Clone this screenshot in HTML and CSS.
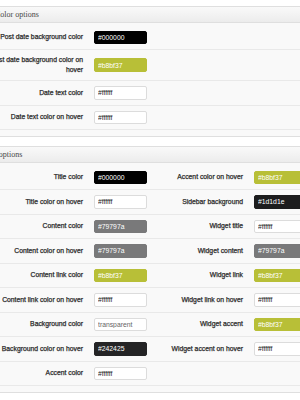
FILE: index.html
```html
<!DOCTYPE html>
<html lang="en">
<head>
    <meta charset="UTF-8">
    <meta name="viewport" content="width=device-width, initial-scale=1.0">
    <title>Theme options - Colors</title>
    <link rel="stylesheet" href="styles.css">
</head>
<body>
    <div class="wrap">
        <div class="postbox">
            <h3 class="hndle hndle-short">Color options</h3>
            <div class="inside">
                <div class="form-row">
                    <label class="field-label">Post date background color</label>
                    <div class="field"><input class="color-input c-black" type="text" value="#000000"></div>
                </div>
                <div class="form-row">
                    <label class="field-label">Post date background color on hover</label>
                    <div class="field"><input class="color-input c-green" type="text" value="#b8bf37"></div>
                </div>
                <div class="form-row">
                    <label class="field-label">Date text color</label>
                    <div class="field"><input class="color-input c-white" type="text" value="#ffffff"></div>
                </div>
                <div class="form-row">
                    <label class="field-label">Date text color on hover</label>
                    <div class="field"><input class="color-input c-white" type="text" value="#ffffff"></div>
                </div>
            </div>
        </div>

        <div class="postbox">
            <h3 class="hndle">Post options</h3>
            <div class="inside">
                <div class="form-row">
                    <label class="field-label">Title color</label>
                    <div class="field"><input class="color-input c-black" type="text" value="#000000"></div>
                    <label class="field-label side">Accent color on hover</label>
                    <div class="field"><input class="color-input c-green" type="text" value="#b8bf37"></div>
                </div>
                <div class="form-row">
                    <label class="field-label">Title color on hover</label>
                    <div class="field"><input class="color-input c-white" type="text" value="#ffffff"></div>
                    <label class="field-label side">Sidebar background</label>
                    <div class="field"><input class="color-input c-coal" type="text" value="#1d1d1e"></div>
                </div>
                <div class="form-row">
                    <label class="field-label">Content color</label>
                    <div class="field"><input class="color-input c-gray" type="text" value="#79797a"></div>
                    <label class="field-label side">Widget title</label>
                    <div class="field"><input class="color-input c-white" type="text" value="#ffffff"></div>
                </div>
                <div class="form-row">
                    <label class="field-label">Content color on hover</label>
                    <div class="field"><input class="color-input c-gray" type="text" value="#79797a"></div>
                    <label class="field-label side">Widget content</label>
                    <div class="field"><input class="color-input c-gray" type="text" value="#79797a"></div>
                </div>
                <div class="form-row">
                    <label class="field-label">Content link color</label>
                    <div class="field"><input class="color-input c-green" type="text" value="#b8bf37"></div>
                    <label class="field-label side">Widget link</label>
                    <div class="field"><input class="color-input c-green" type="text" value="#b8bf37"></div>
                </div>
                <div class="form-row">
                    <label class="field-label">Content link color on hover</label>
                    <div class="field"><input class="color-input c-white" type="text" value="#ffffff"></div>
                    <label class="field-label side">Widget link on hover</label>
                    <div class="field"><input class="color-input c-white" type="text" value="#ffffff"></div>
                </div>
                <div class="form-row">
                    <label class="field-label">Background color</label>
                    <div class="field"><input class="color-input c-clear" type="text" value="transparent"></div>
                    <label class="field-label side">Widget accent</label>
                    <div class="field"><input class="color-input c-green" type="text" value="#b8bf37"></div>
                </div>
                <div class="form-row">
                    <label class="field-label">Background color on hover</label>
                    <div class="field"><input class="color-input c-dark" type="text" value="#242425"></div>
                    <label class="field-label side">Widget accent on hover</label>
                    <div class="field"><input class="color-input c-white" type="text" value="#ffffff"></div>
                </div>
                <div class="form-row">
                    <label class="field-label">Accent color</label>
                    <div class="field"><input class="color-input c-white" type="text" value="#ffffff"></div>
                </div>
            </div>
        </div>
    </div>
</body>
</html>
```

FILE: styles.css
```css
* {
    margin: 0;
    padding: 0;
    box-sizing: border-box;
}

html,
body {
    overflow: hidden;
}

body {
    font-family: 'Liberation Sans', Arial, sans-serif;
    background: #fff;
    color: #333;
}

.wrap {
    width: 380px;
    margin-left: -24px;
    padding-top: 6px;
}

.postbox {
    border: 1px solid #dfdfdf;
    border-radius: 3px;
    background: #f9f9f9;
    margin-bottom: 9px;
}

.hndle {
    height: 16px;
    line-height: 15px;
    padding-left: 6px;
    font-family: 'Liberation Serif', 'Times New Roman', serif;
    font-size: 8px;
    font-weight: normal;
    color: #464646;
    background: linear-gradient(to bottom, #f9f9f9, #ececec);
    border-bottom: 1px solid #dfdfdf;
}

.hndle-short {
    padding-left: 18px;
}

.inside {
    padding: 2.5px 0 6px;
}

.form-row {
    display: flex;
    align-items: center;
    padding: 5px 0;
    border-bottom: 1px solid #e9e9e9;
}

.field-label {
    flex: 0 0 117px;
    padding-left: 6px;
    padding-right: 11px;
    text-align: right;
    font-size: 6.8px;
    line-height: 10px;
    color: #222;
    -webkit-text-stroke: 0.25px #333;
}

.field-label.side {
    flex-basis: 107px;
}

.field {
    flex: 0 0 53px;
    display: flex;
}

.color-input {
    width: 53px;
    height: 13.5px;
    padding: 0 3px;
    border: 1px solid #dcdcdc;
    border-radius: 2px;
    font-family: 'Liberation Sans', Arial, sans-serif;
    font-size: 6.8px;
    outline: none;
}

.c-black {
    background: #000000;
    border-color: #000000;
    color: #fff;
}

.c-green {
    background: #b8bf37;
    border-color: #b8bf37;
    color: #fff;
}

.c-gray {
    background: #79797a;
    border-color: #79797a;
    color: #fff;
}

.c-coal {
    background: #1d1d1e;
    border-color: #1d1d1e;
    color: #fff;
}

.c-dark {
    background: #242425;
    border-color: #242425;
    color: #fff;
}

.c-white {
    background: #fff;
    color: #222;
}

.c-clear {
    background: #fff;
    color: #666;
}
```
